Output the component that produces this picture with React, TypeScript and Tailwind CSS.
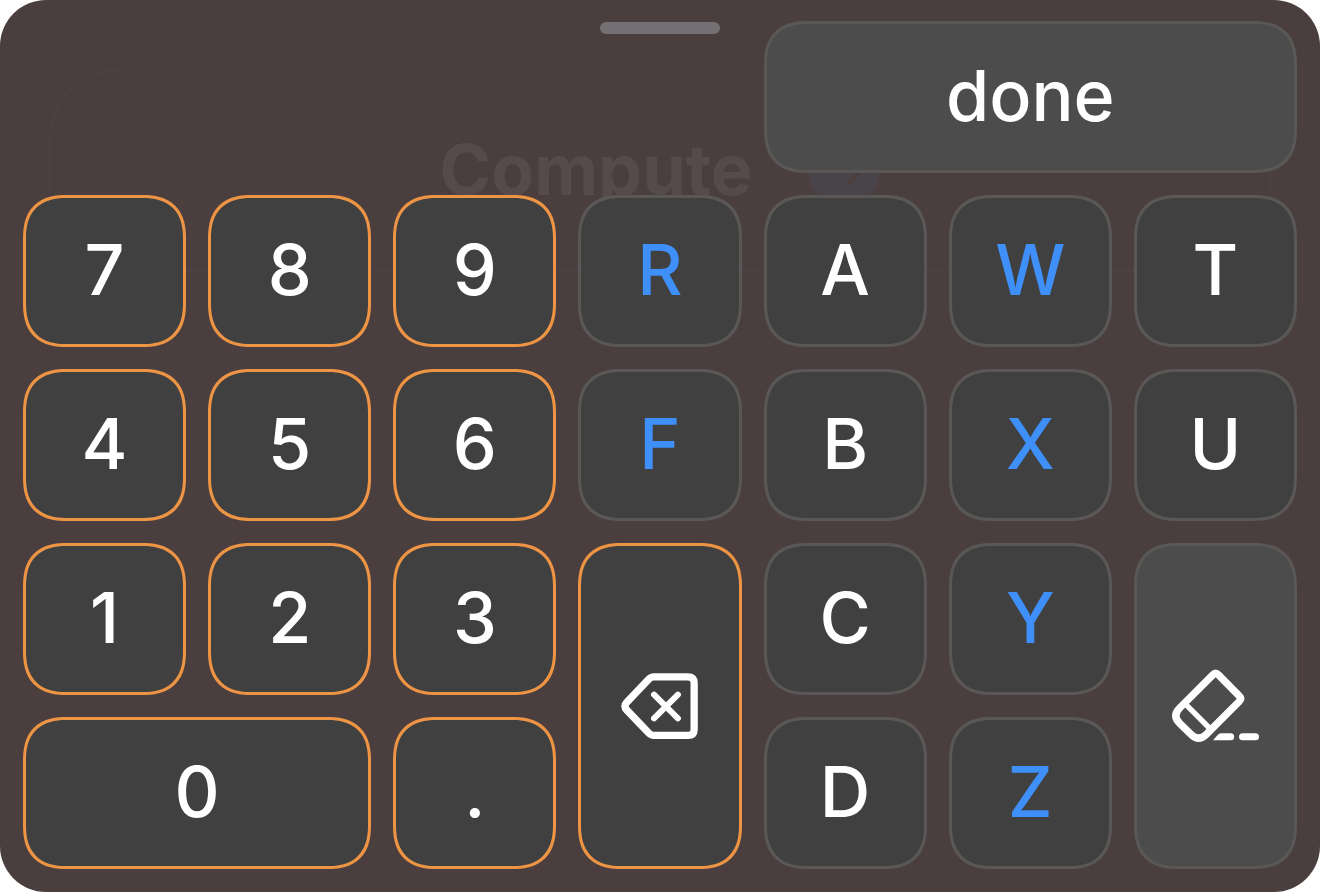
import { clsx } from "clsx";
import type { ReactNode } from "react";

type Outline = "orange" | "gray";

interface KeyDef {
  id: string;
  label: ReactNode;
  name?: string;
  outline?: Outline;
  accent?: boolean;
  raised?: boolean;
  place?: string;
}

function BackspaceIcon() {
  return (
    <svg
      width="77"
      height="66"
      viewBox="153 98 231 199"
      fill="none"
      stroke="currentColor"
      strokeLinecap="round"
      strokeLinejoin="round"
      aria-hidden="true"
    >
      <path
        d="M251 109.5H354Q373 109.5 373 128V268Q373 286 354 286H251Q243 286 236 279L170 210Q159 198 170 186L236 117Q243 109.5 251 109.5Z"
        strokeWidth="22"
      />
      <path d="M252 163L324 235M324 163L252 235" strokeWidth="18" />
    </svg>
  );
}

function EraserIcon() {
  return (
    <svg
      width="87"
      height="73"
      viewBox="126 89 261 219"
      fill="none"
      stroke="currentColor"
      strokeLinecap="round"
      strokeLinejoin="round"
      className="overflow-visible"
      aria-hidden="true"
    >
      <path
        d="M248.5 103.5Q257 95 265.5 103.5L327.5 166.5Q336 175 327.5 183.5L229 282Q206 305 183 282L149 249Q126 226 149 203Z"
        strokeWidth="22"
      />
      <path d="M165 190L241 266" strokeWidth="16" />
      <path d="M249 300L263 284Q267 279 273 279H302A10.5 10.5 0 0 1 302 300Z" fill="currentColor" stroke="none" />
      <path d="M337.5 289.5H376.5" strokeWidth="21" />
    </svg>
  );
}

const KEYS: KeyDef[] = [
  { id: "done", label: "done", raised: true, place: "col-start-5 col-span-3" },

  { id: "7", label: "7", outline: "orange" },
  { id: "8", label: "8", outline: "orange" },
  { id: "9", label: "9", outline: "orange" },
  { id: "r", label: "R", accent: true },
  { id: "a", label: "A" },
  { id: "w", label: "W", accent: true },
  { id: "t", label: "T" },

  { id: "4", label: "4", outline: "orange" },
  { id: "5", label: "5", outline: "orange" },
  { id: "6", label: "6", outline: "orange" },
  { id: "f", label: "F", accent: true },
  { id: "b", label: "B" },
  { id: "x", label: "X", accent: true },
  { id: "u", label: "U" },

  { id: "1", label: "1", outline: "orange" },
  { id: "2", label: "2", outline: "orange" },
  { id: "3", label: "3", outline: "orange" },
  { id: "del", label: <BackspaceIcon />, name: "Delete", outline: "orange", place: "row-span-2" },
  { id: "c", label: "C" },
  { id: "y", label: "Y", accent: true },
  { id: "clear", label: <EraserIcon />, name: "Clear", raised: true, place: "row-span-2" },

  { id: "0", label: "0", outline: "orange", place: "col-span-2" },
  { id: "dot", label: ".", outline: "orange" },
  { id: "d", label: "D" },
  { id: "z", label: "Z", accent: true },
];

function Key({ label, name, outline = "gray", accent, raised, place }: KeyDef) {
  return (
    <button
      type="button"
      aria-label={name}
      className={clsx(
        "flex items-center justify-center rounded-[44px] border-[3px] text-[70px] leading-none font-medium [corner-shape:superellipse(1.3)]",
        typeof label === "string" && "pb-0.5",
        outline === "orange" ? "border-[#ed9445]" : "border-[#5a5757]",
        raised ? "bg-[#4c4c4c]" : "bg-[#404040]",
        accent ? "text-[#3f8ff9]" : "text-white",
        place
      )}
    >
      {label}
    </button>
  );
}

// the screen under the sheet, barely visible through it
function Underlay() {
  return (
    <div className="absolute inset-x-12 top-[68px] flex h-[204px] items-center justify-center gap-14 rounded-[84px] border-[3px] border-[#4c4045] [corner-shape:superellipse(1.3)]">
      <span className="text-[70px] leading-none font-bold text-[#564b4a]">Compute</span>
      <svg width="72" height="72" viewBox="0 0 72 72" aria-hidden="true">
        <circle cx="36" cy="36" r="36" fill="#49444a" />
        <path d="M41 48L54 36" stroke="#4b3f3e" strokeWidth="5" strokeLinecap="round" />
      </svg>
    </div>
  );
}

export default function App() {
  return (
    <main className="relative overflow-hidden rounded-[46px] bg-[#4a3f3e] font-['Inter',sans-serif]">
      <Underlay />
      <div className="absolute inset-x-0 top-[22px] mx-auto h-3 w-[120px] rounded-full bg-[#757074]" />
      <div className="relative grid auto-rows-[152px] grid-cols-7 gap-[22px] px-[23px] pt-[21px] pb-[23px]">
        {KEYS.map((k) => (
          <Key key={k.id} {...k} />
        ))}
      </div>
    </main>
  );
}
